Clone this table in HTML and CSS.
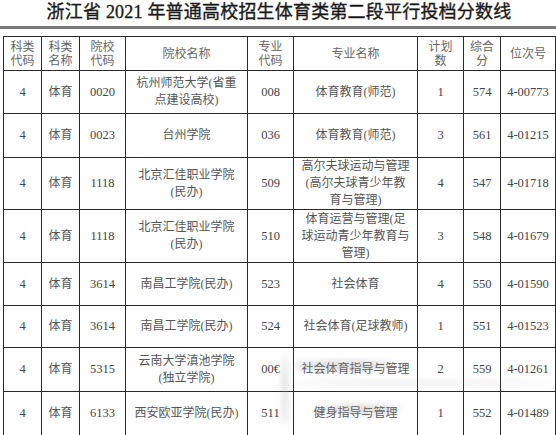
FILE: index.html
```html
<!DOCTYPE html>
<html lang="zh-CN">
<head>
<meta charset="utf-8">
<title>浙江省 2021 年普通高校招生体育类第二段平行投档分数线</title>
<link rel="stylesheet" href="styles.css">
</head>
<body>
<div class="page">
  <h1 class="title">浙江省 2021 年普通高校招生体育类第二段平行投档分数线</h1>
  <div class="rule"></div>
  <table class="grid">
    <colgroup>
      <col class="c1"><col class="c2"><col class="c3"><col class="c4"><col class="c5">
      <col class="c6"><col class="c7"><col class="c8"><col class="c9">
    </colgroup>
    <thead>
      <tr class="h-head">
        <th>科类<br>代码</th><th>科类<br>名称</th><th>院校<br>代码</th><th>院校名称</th><th>专业<br>代码</th>
        <th>专业名称</th><th>计划<br>数</th><th>综合<br>分</th><th>位次号</th>
      </tr>
    </thead>
    <tbody>
      <tr class="h-43">
        <td class="num">4</td><td>体育</td><td class="num">0020</td><td>杭州师范大学(省重<br>点建设高校)</td><td class="num">008</td>
        <td>体育教育(师范)</td><td class="num">1</td><td class="num">574</td><td class="num">4-00773</td>
      </tr>
      <tr class="h-44">
        <td class="num">4</td><td>体育</td><td class="num">0023</td><td>台州学院</td><td class="num">036</td>
        <td>体育教育(师范)</td><td class="num">3</td><td class="num">561</td><td class="num">4-01215</td>
      </tr>
      <tr class="h-50">
        <td class="num">4</td><td>体育</td><td class="num">1118</td><td>北京汇佳职业学院<br>(民办)</td><td class="num">509</td>
        <td>高尔夫球运动与管理<br>(高尔夫球青少年教<br>育与管理)</td><td class="num">4</td><td class="num">547</td><td class="num">4-01718</td>
      </tr>
      <tr class="h-53">
        <td class="num">4</td><td>体育</td><td class="num">1118</td><td>北京汇佳职业学院<br>(民办)</td><td class="num">510</td>
        <td>体育运营与管理(足<br>球运动青少年教育与<br>管理)</td><td class="num">3</td><td class="num">548</td><td class="num">4-01679</td>
      </tr>
      <tr class="h-43">
        <td class="num">4</td><td>体育</td><td class="num">3614</td><td>南昌工学院(民办)</td><td class="num">523</td>
        <td>社会体育</td><td class="num">4</td><td class="num">550</td><td class="num">4-01590</td>
      </tr>
      <tr class="h-42">
        <td class="num">4</td><td>体育</td><td class="num">3614</td><td>南昌工学院(民办)</td><td class="num">524</td>
        <td>社会体育(足球教师)</td><td class="num">1</td><td class="num">551</td><td class="num">4-01523</td>
      </tr>
      <tr class="h-44">
        <td class="num">4</td><td>体育</td><td class="num">5315</td><td>云南大学滇池学院<br>(独立学院)</td><td class="num">00€</td>
        <td>社会体育指导与管理</td><td class="num">2</td><td class="num">559</td><td class="num">4-01261</td>
      </tr>
      <tr class="h-44">
        <td class="num">4</td><td>体育</td><td class="num">6133</td><td>西安欧亚学院(民办)</td><td class="num">511</td>
        <td>健身指导与管理</td><td class="num">1</td><td class="num">552</td><td class="num">4-01489</td>
      </tr>
    </tbody>
  </table>
  <div class="smudge" aria-hidden="true">
    <span class="blot b1"></span>
    <span class="blot b2"></span>
    <span class="blot b3"></span>
    <span class="blot b4"></span>
  </div>
</div>
</body>
</html>
```

FILE: styles.css
```css
html, body {
  margin: 0;
  padding: 0;
  background: #ffffff;
}

.page {
  position: relative;
  width: 556px;
  height: 435px;
  overflow: hidden;
  font-family: "Liberation Serif", "Noto Sans CJK SC", serif;
  color: #4a4a4a;
}

.title {
  margin: 0;
  height: 25px;
  font-size: 18px;
  line-height: 25px;
  font-weight: normal;
  -webkit-text-stroke: 0.35px #1a1a1a;
  text-align: center;
  color: #1a1a1a;
  letter-spacing: 0.2px;
  padding-left: 2px;
}

.rule {
  height: 3px;
  margin-top: 1px;
  background: #7a7a7a;
}

.grid {
  margin: 7px 0 0 3px;
  width: 552px;
  table-layout: fixed;
  border-collapse: collapse;
  border: 1.5px solid #262626;
  font-size: 12px;
  line-height: 17px;
}

.c1 { width: 38px; }
.c2 { width: 38px; }
.c3 { width: 46px; }
.c4 { width: 122px; }
.c5 { width: 46px; }
.c6 { width: 124px; }
.c7 { width: 46px; }
.c8 { width: 37px; }
.c9 { width: 55px; }

.grid th,
.grid td {
  border: 1px solid #2a2a2a;
  padding: 0;
  text-align: center;
  vertical-align: middle;
  font-weight: normal;
  white-space: nowrap;
  color: #555555;
}

.grid th {
  line-height: 14px;
  color: #666666;
}

.grid .num {
  font-family: "Liberation Serif", serif;
  font-size: 12.5px;
  color: #444444;
}

.h-head { height: 34px; }
.h-42 { height: 42px; }
.h-43 { height: 43px; }
.h-44 { height: 44px; }
.h-50 { height: 50px; }
.h-53 { height: 53px; }

.smudge {
  position: absolute;
  left: 280px;
  top: 345px;
  width: 276px;
  height: 90px;
  pointer-events: none;
}

.blot {
  position: absolute;
  display: block;
  background: #9a9a9a;
  border-radius: 50%;
  filter: blur(3px);
  opacity: 0.35;
}

.b1 { left: 14px; top: 16px; width: 100px; height: 10px; }
.b2 { left: 40px; top: 60px; width: 80px; height: 9px; }
.b3 { left: 0; top: 36px; width: 276px; height: 3px; opacity: 0.25; }
.b4 { left: 2px; top: 10px; width: 6px; height: 70px; opacity: 0.3; }
```
